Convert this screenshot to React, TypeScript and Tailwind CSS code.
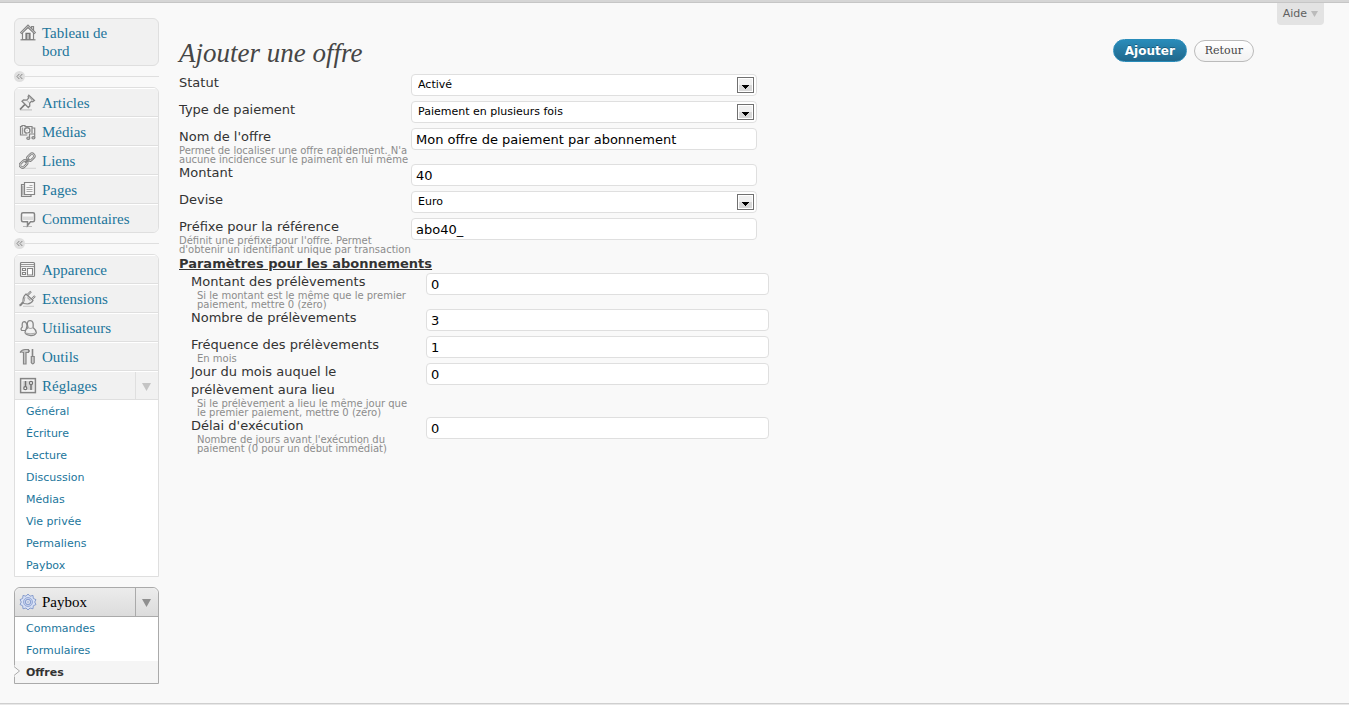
import type { ReactNode } from "react";

const serif = "font-['Liberation_Serif',serif]";

function Icon({ children }: { children: ReactNode }) {
  return (
    <svg width="18" height="18" viewBox="0 0 18 18" fill="none" stroke="#858585" strokeWidth="1.2" className="shrink-0" aria-hidden="true">
      {children}
    </svg>
  );
}

const icons = {
  home: (
    <Icon>
      <path d="M12.5 5V2.5h2V7" fill="#ddd" />
      <path d="M3.5 8.5v7h11v-7L9 3.5z" fill="#f6f6f6" />
      <path d="M1.7 9.3 9 2l7.3 7.3" strokeWidth="2.4" />
      <path d="M2.2 9 9 2.2 15.8 9" stroke="#d5d5d5" strokeWidth=".8" />
      <path d="M7 15.5V9.3h4v6.2z" fill="#888" stroke="#777" />
      <path d="M9 10v5.5" stroke="#ddd" />
      <path d="M1.5 15.8h15" />
    </Icon>
  ),
  pin: (
    <Icon>
      <path d="M1 15.800h12" stroke="#c4c4c4" />
      <path d="M1 15.500 6.300 10" stroke="#777" strokeWidth="1.700" />
      <path d="m9.800 1.300 5.600 5.200-1.700 1.200-1.200-.500-1.900 2 .2 2.800-1.500 1.500L3 7.200l1.500-1.400 3.200.3 1.900-2-.5-1.500z" fill="#eee" strokeWidth="1.300" />
      <path d="M7.800 6.200 10.600 9M10.300 3.500l3 2.800" stroke="#aaa" strokeWidth="1" />
    </Icon>
  ),
  media: (
    <Icon>
      <path d="M1.500 3.500h1.500v-1h3v1h7v8.500h-11.500z" fill="#eee" />
      <circle cx="8.200" cy="7.400" r="2.700" fill="#fff" strokeWidth="1.400" />
      <circle cx="8.200" cy="7.400" r=".9" fill="#ccc" stroke="none" />
      <path d="M3.500 4.500v7" stroke="#999" />
      <path d="M8.500 10.200h8v5.500H8z" fill="#f1f1f1" stroke="none" />
      <path d="M13 5h2.700v9.500M10.500 15v-4h5" />
      <ellipse cx="9.300" cy="15.200" rx="1.500" ry="1.200" fill="#ccc" />
      <ellipse cx="14.400" cy="14.800" rx="1.500" ry="1.200" fill="#ccc" />
    </Icon>
  ),
  link: (
    <Icon>
      <path d="M4 16.3h13" stroke="#d8d8d8" />
      <rect x="-4" y="-2.4" width="8" height="4.8" rx="2.4" transform="translate(11.8 5.2) rotate(-43)" strokeWidth="2.4" stroke="#808080" />
      <rect x="-4" y="-2.4" width="8" height="4.8" rx="2.4" transform="translate(4.6 12) rotate(-43)" strokeWidth="2.4" stroke="#808080" />
      <rect x="-4" y="-2.4" width="8" height="4.8" rx="2.4" transform="translate(11.8 5.2) rotate(-43)" strokeWidth=".8" stroke="#e4e4e4" />
      <rect x="-4" y="-2.4" width="8" height="4.8" rx="2.4" transform="translate(4.6 12) rotate(-43)" strokeWidth=".8" stroke="#e4e4e4" />
      <path d="m6 10.8 4.3-4.2" strokeWidth="2" />
    </Icon>
  ),
  pages: (
    <Icon>
      <path d="M5.5 3.500h-3v12h9.500v-2" fill="#ddd" />
      <path d="M5.500 1.500h10v12h-10z" fill="#f8f8f8" />
      <path d="M10.500 4.500h3M7.500 6.500h6M7.500 8.500h6M7.500 10.500h6" stroke="#aaa" strokeWidth="1" />
      <path d="M3.800 5v9" stroke="#aaa" />
    </Icon>
  ),
  comment: (
    <Icon>
      <path d="M4 16.500h9" stroke="#b8b8b8" />
      <path d="M4 2.700h10q1.500 0 1.500 1.500v6q0 1.500-1.500 1.500h-2.500L8.500 15.500V11.700H4q-1.500 0-1.500-1.500v-6Q2.500 2.700 4 2.700z" fill="#f8f8f8" strokeWidth="1.500" />
      <path d="M4 6.500h10V10H4z" fill="#dcdcdc" stroke="none" />
    </Icon>
  ),
  appearance: (
    <Icon>
      <rect x="1.500" y="1.500" width="14" height="14" rx="1" fill="#f4f4f4" />
      <path d="M2 3.500h13M2 5.500h13" stroke="#999" strokeWidth="1" />
      <path d="M3.500 7.500h3v2h-3zM3.500 11.500h3v2h-3zM8.500 7.500h5v6.500h-5z" strokeWidth="1.100" fill="#fff" />
    </Icon>
  ),
  plug: (
    <Icon>
      <path d="M4 16.300h11" stroke="#d0d0d0" />
      <path d="M.5 15.500q1.500-.5 2-1.500t2-1.500" strokeWidth="2" />
      <path d="m7 4 7 6.500q-1.500 3-5.500 3.500L5 13.500l-1-1.500Q3.500 7 7 4z" fill="#eee" />
      <path d="M8 5.500 12 1.500M12.500 9.500l3.500-3.500" strokeWidth="2.200" />
      <path d="m8.500 5 3.200-3.200M12.800 9.200l2.800-2.800" stroke="#eee" strokeWidth=".7" />
      <path d="M6 7q-1 2-.5 4.500M8.500 7.500l3 3" stroke="#aaa" />
    </Icon>
  ),
  users: (
    <Icon>
      <path d="M3.300 8Q1 10 2.800 11.500h4L8 7Q7.500 2.700 5.200 2.700 2.600 2.800 3.300 8z" fill="#eee" />
      <path d="M9 8.500Q7 1.800 11 1.700t3 6.800q3.700 3 3.200 5.500-1.500 2.700-5.500 2.500t-5.500-2.500Q5.500 11 9 8.500z" fill="#f2f2f2" strokeWidth="1.300" />
      <path d="M9 8.500q2.500 2 5 0M6.500 14q5 1.500 10.200 0" stroke="#aaa" />
    </Icon>
  ),
  tools: (
    <Icon>
      <path d="M1 4.500Q3 1.500 6 1.500h3.500v3H7V16H4.500V4.500Q2.500 3.500 1 4.500z" fill="#ccc" stroke="#858585" />
      <path d="M13.500 1v7" strokeWidth="1.600" />
      <path d="M12.300 8.500h2.900v6.200q-1.400 2.200-2.900 0z" fill="#ccc" />
      <path d="M9.500 3h1.500" strokeWidth="1.500" />
    </Icon>
  ),
  settings: (
    <Icon>
      <rect x="1.600" y="1.600" width="14.800" height="14" fill="#f5f5f5" strokeWidth="1.500" />
      <path d="M3.500 4h11v9h-11z" fill="#d6d6d6" stroke="none" />
      <path d="M6.500 4v6M12 7.500V13" stroke="#707070" strokeWidth="1.500" />
      <circle cx="6.300" cy="11.200" r="1.500" stroke="#707070" fill="#eee" />
      <circle cx="12" cy="5.900" r="1.600" stroke="#707070" fill="#eee" />
    </Icon>
  ),
  gear: (
    <Icon>
      <path d="m9 1 2 2.200 3-.8.300 3 2.700 1.300L15.700 9l1.300 2.500-2.700 1.300-.3 3-3-.8L9 17l-2-2-3 .8-.3-3L1 11.500 2.300 9 1 6.700l2.700-1.300.3-3 3 .8z" fill="#d8e1f5" stroke="#7f96c9" strokeWidth=".9" />
      <circle cx="9" cy="9" r="4.500" stroke="#92a6d4" fill="#c3d0ef" strokeWidth=".9" />
      <rect x="6.800" y="6.800" width="4.400" height="4.400" rx="1" fill="#fff" stroke="#6480bd" strokeWidth=".9" />
      <circle cx="9" cy="9" r=".8" fill="#6480bd" stroke="none" />
    </Icon>
  ),
};

function Triangle() {
  return (
    <svg width="9" height="8" viewBox="0 0 9 8" aria-hidden="true">
      <path d="M0 0h9L4.500 8z" fill="currentColor" />
    </svg>
  );
}

function Separator() {
  return (
    <div className="flex h-[21px] items-center">
      <svg width="11" height="11" viewBox="0 0 11 11" aria-hidden="true">
        <circle cx="5.500" cy="5.500" r="5.500" fill="#dfdfdf" />
        <path d="M5.300 3 3 5.500 5.300 8M8.300 3 6 5.500 8.300 8" fill="none" stroke="#888" />
      </svg>
      <div className="h-px flex-1 bg-[#dfdfdf]" />
    </div>
  );
}

function MenuLink({ icon, label }: { icon: ReactNode; label: string }) {
  return (
    <a href="#" className={`flex h-full flex-1 items-center gap-[5px] pl-1 text-[15px] leading-[18px] ${serif}`}>
      {icon}
      {label}
    </a>
  );
}

const rowClass = "flex h-[29px] border-b border-t border-b-[#dfdfdf] border-t-white bg-[#f1f1f1] text-[#21759b]";

function MenuRows({ items }: { items: [ReactNode, string][] }) {
  return items.map(([icon, label]) => (
    <li key={label} className={`${rowClass} last:h-7 last:border-b-0`}>
      <MenuLink icon={icon} label={label} />
    </li>
  ));
}

function SubLinks({ items }: { items: string[] }) {
  return items.map((label) => (
    <li key={label}>
      <a href="#" className="block pt-[2px] pl-[11px] text-[11px] leading-5 text-[#21759b]">{label}</a>
    </li>
  ));
}

function Sidebar() {
  return (
    <nav className="w-[145px] shrink-0 pt-[15px]">
      <a href="#" className={`flex gap-[5px] rounded-md border border-[#dfdfdf] bg-[#f1f1f1] py-[5px] pl-1 text-[15px] leading-[18px] text-[#21759b] ${serif}`}>
        {icons.home}
        <span className="w-20">Tableau de bord</span>
      </a>
      <Separator />
      <ul className="overflow-hidden rounded-md border border-[#dfdfdf]">
        <MenuRows
          items={[
            [icons.pin, "Articles"],
            [icons.media, "Médias"],
            [icons.link, "Liens"],
            [icons.pages, "Pages"],
            [icons.comment, "Commentaires"],
          ]}
        />
      </ul>
      <Separator />
      <div className="overflow-hidden rounded-t-md border border-[#dfdfdf] bg-white">
        <ul>
          {(
            [
              [icons.appearance, "Apparence"],
              [icons.plug, "Extensions"],
              [icons.users, "Utilisateurs"],
              [icons.tools, "Outils"],
            ] as [ReactNode, string][]
          ).map(([icon, label]) => (
            <li key={label} className={rowClass}>
              <MenuLink icon={icon} label={label} />
            </li>
          ))}
          <li className={rowClass}>
            <MenuLink icon={icons.settings} label="Réglages" />
            <button type="button" aria-label="Replier Réglages" className="flex w-[23px] items-center justify-center border-l border-[#dfdfdf] pt-[3px] pr-[2px] text-[#c4c4c4]">
              <Triangle />
            </button>
          </li>
        </ul>
        <ul>
          <SubLinks items={["Général", "Écriture", "Lecture", "Discussion", "Médias", "Vie privée", "Permaliens", "Paybox"]} />
        </ul>
      </div>
      <div className="mt-[10px] rounded-t-md border border-[#aaa] bg-white">
        <div className="flex h-[29px] rounded-t-md border-b border-[#aaa] bg-linear-to-b from-[#ececec] to-[#dcdcdc] text-black">
          <MenuLink icon={icons.gear} label="Paybox" />
          <button type="button" aria-label="Replier Paybox" className="flex w-[23px] items-center justify-center border-l border-[#aaa] pt-px pr-[2px] text-[#8f8f8f]">
            <Triangle />
          </button>
        </div>
        <ul>
          <SubLinks items={["Commandes", "Formulaires"]} />
          <li className="relative bg-[#f5f5f5]">
            <svg width="7" height="12" viewBox="0 0 7 12" className="absolute top-1 -left-px" aria-hidden="true">
              <path d="M0 0v12l6-6z" fill="#f9f9f9" />
              <path d="M0 1.500 5.500 6 0 10.500" fill="none" stroke="#aaa" />
            </svg>
            <a href="#" className="block pt-[2px] pl-[11px] text-[11px] leading-5 font-bold text-[#333]">Offres</a>
          </li>
        </ul>
      </div>
    </nav>
  );
}

type FieldProps = { id: string; label: string[]; value: string; help?: string[]; select?: boolean; nested?: boolean };

function Field({ id, label, value, help, select, nested }: FieldProps) {
  return (
    <div className="flex min-h-[27px] items-start">
      <div className={`${nested ? "w-[235px]" : "w-[232px]"} shrink-0 whitespace-nowrap`}>
        <label htmlFor={id} className="block text-[13px] leading-[18px] text-[#333]">
          {label.map((line) => (
            <span key={line} className="block">{line}</span>
          ))}
        </label>
        {help && (
          <p className={`text-[10px] leading-[9px] text-[#8c8c8c] ${nested ? "pl-[6px]" : ""}`}>
            {help.map((line) => (
              <span key={line} className="block">{line}</span>
            ))}
          </p>
        )}
      </div>
      {select ? (
        <div className="relative w-[346px]">
          <select id={id} defaultValue={value} className="block h-[22px] w-full appearance-none rounded border border-[#dfdfdf] bg-white pt-px pl-[6px] text-[11px] text-black">
            <option>{value}</option>
          </select>
          <svg width="17" height="16" viewBox="0 0 17 16" className="pointer-events-none absolute top-[3px] right-[3px]" aria-hidden="true">
            <rect x=".5" y=".5" width="16" height="15" fill="#fff" stroke="#707070" />
            <path d="M2 2h13v6H2z" fill="#f0f0f0" />
            <path d="M2 8h13v6H2z" fill="#d8d8d8" />
            <path d="M5 8h7v1h-1v1h-1v1H9v1H8v-1H7v-1H6V9H5z" fill="#000" />
          </svg>
        </div>
      ) : (
        <input
          id={id}
          type="text"
          defaultValue={value}
          className={`${nested ? "w-[343px]" : "w-[346px]"} block h-[22px] rounded border border-[#dfdfdf] bg-white px-1 text-[13px] text-black`}
        />
      )}
    </div>
  );
}

export default function App() {
  return (
    <div className="flex min-h-screen flex-col bg-[#f9f9f9] font-['DejaVu_Sans',sans-serif]">
      <div className="h-[3px] border-b border-[#c6c6c6] bg-[#d6d6d6]" />
      <div className="flex flex-1 pl-[14px]">
        <Sidebar />
        <main className="flex-1 pl-5">
          <div className="flex justify-end pr-[25px]">
            <button type="button" className="flex h-[22px] items-center gap-1 rounded-b bg-[#e3e3e3] px-[6px] text-[11px] text-[#606060]">
              Aide
              <svg width="7" height="6" viewBox="0 0 7 6" aria-hidden="true">
                <path d="M0 0h7L3.500 6z" fill="#bbb" />
              </svg>
            </button>
          </div>
          <form className="pr-[95px]" onSubmit={(e) => e.preventDefault()}>
            <div className="flex h-[49px] items-start justify-between pt-[14px]">
              <h1 className={`text-[27px] leading-7 text-[#464646] italic ${serif}`}>Ajouter une offre</h1>
              <div className="flex items-end gap-[7px]">
                <button type="submit" className="h-[23px] rounded-full border border-[#298cba] bg-linear-to-b from-[#298cba] to-[#21688c] px-[11px] pt-px text-xs font-bold text-white [text-shadow:0_-1px_0_rgba(0,0,0,0.3)]">
                  Ajouter
                </button>
                <button type="button" className="h-[22px] rounded-full border border-[#bbb] bg-linear-to-b from-white to-[#f2f2f2] px-[10px] pt-px font-['DejaVu_Serif',serif] text-[11px] text-[#464646]">
                  Retour
                </button>
              </div>
            </div>
            <Field id="statut" label={["Statut"]} value="Activé" select />
            <Field id="type" label={["Type de paiement"]} value="Paiement en plusieurs fois" select />
            <Field
              id="nom"
              label={["Nom de l'offre"]}
              value="Mon offre de paiement par abonnement"
              help={["Permet de localiser une offre rapidement. N'a", "aucune incidence sur le paiment en lui même"]}
            />
            <Field id="montant" label={["Montant"]} value="40" />
            <Field id="devise" label={["Devise"]} value="Euro" select />
            <Field
              id="prefixe"
              label={["Préfixe pour la référence"]}
              value="abo40_"
              help={["Définit une préfixe pour l'offre. Permet", "d'obtenir un identifiant unique par transaction"]}
            />
            <h2 className="pt-px text-[13px] leading-[18px] font-bold text-[#333] underline">Paramètres pour les abonnements</h2>
            <div className="pl-3">
              <Field
                id="prelevements"
                label={["Montant des prélèvements"]}
                value="0"
                help={["Si le montant est le même que le premier", "paiement, mettre 0 (zéro)"]}
                nested
              />
              <Field id="nombre" label={["Nombre de prélèvements"]} value="3" nested />
              <Field id="frequence" label={["Fréquence des prélèvements"]} value="1" help={["En mois"]} nested />
              <Field
                id="jour"
                label={["Jour du mois auquel le", "prélèvement aura lieu"]}
                value="0"
                help={["Si le prélèvement a lieu le même jour que", "le premier paiement, mettre 0 (zéro)"]}
                nested
              />
              <Field
                id="delai"
                label={["Délai d'exécution"]}
                value="0"
                help={["Nombre de jours avant l'exécution du", "paiement (0 pour un début immédiat)"]}
                nested
              />
            </div>
          </form>
        </main>
      </div>
      <div className="h-[2px] border-t border-[#cfcfcf] bg-[#e8e8e8]" />
    </div>
  );
}
